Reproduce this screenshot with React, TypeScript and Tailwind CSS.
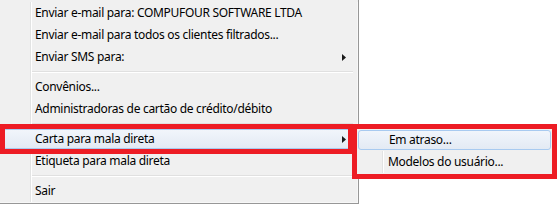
import React from "react";

type Item = { kind: "item"; label: string; arrow?: boolean; hot?: boolean } | { kind: "sep" };

const items: Item[] = [
  { kind: "item", label: "Enviar e-mail para: COMPUFOUR SOFTWARE LTDA" },
  { kind: "item", label: "Enviar e-mail para todos os clientes filtrados..." },
  { kind: "item", label: "Enviar SMS para:", arrow: true },
  { kind: "sep" },
  { kind: "item", label: "Convênios..." },
  { kind: "item", label: "Administradoras de cartão de crédito/débito" },
  { kind: "sep" },
  { kind: "item", label: "Carta para mala direta", arrow: true, hot: true },
  { kind: "item", label: "Etiqueta para mala direta" },
  { kind: "sep" },
  { kind: "item", label: "Sair" },
];

function Arrow() {
  return (
    <svg width="4" height="7" viewBox="0 0 4 7" className="block">
      <path d="M0 0 L4 3.5 L0 7 Z" fill="#1a1a1a" />
    </svg>
  );
}

function Gutter({ w }: { w: string }) {
  return (
    <div className={`${w} self-stretch flex shrink-0`}>
      <div className="flex-1" />
      <div className="w-px bg-[#e2e3e3]" />
      <div className="w-px bg-white" />
    </div>
  );
}

function MainRow({ item }: { item: Item }) {
  if (item.kind === "sep") {
    return (
      <div className="flex h-[8px]">
        <Gutter w="w-[32px]" />
        <div className="flex-1 flex flex-col justify-center pr-[3px]">
          <div className="h-px bg-[#e0e0e0]" />
          <div className="h-px bg-white" />
        </div>
      </div>
    );
  }
  if (item.hot) {
    return (
      <div className="h-[22px] py-px px-[3px]">
        <div className="h-full flex items-center rounded-[3px] border border-[#a8caf0] bg-gradient-to-b from-[#f1f5fb] to-[#e3eaf4]">
          <div className="w-[31px] shrink-0" />
          <div className="flex-1 whitespace-nowrap">{item.label}</div>
          {item.arrow && (
            <div className="w-[8px] shrink-0 mr-[2px] flex items-center">
              <Arrow />
            </div>
          )}
        </div>
      </div>
    );
  }
  return (
    <div className="flex h-[22px] items-stretch">
      <Gutter w="w-[32px]" />
      <div className="flex-1 flex items-center pl-[3px] whitespace-nowrap">{item.label}</div>
      {item.arrow && (
        <div className="w-[8px] shrink-0 mr-[6px] flex items-center">
          <Arrow />
        </div>
      )}
    </div>
  );
}

export default function App() {
  return (
    <div
      className="relative w-[557px] h-[206px] bg-white overflow-hidden text-[12px] leading-none tracking-[-0.3px] text-black"
      style={{ fontFamily: "'Noto Sans', 'Open Sans', sans-serif" }}
    >
      <div className="w-[359px] h-[204px] bg-[#f0f0f0] border-r border-b border-[#979797] pt-[2px]">
        <div className="h-full border-r border-b border-[#f7f7f7] pr-[1px]">
          {items.map((it, i) => (
            <MainRow key={i} item={it} />
          ))}
        </div>
      </div>

      {/* Submenu popup */}
      <div className="absolute left-[353px] top-[125px] w-[203px] h-[52px] bg-[#f0f0f0] border border-[#979797] pt-[3px] px-[4px]">
        <div className="h-[22px] py-px">
          <div className="h-full flex items-center rounded-[3px] border border-[#a8caf0] bg-gradient-to-b from-[#f1f5fb] to-[#e3eaf4]">
            <div className="w-[30px] shrink-0" />
            <div className="whitespace-nowrap">Em atraso...</div>
          </div>
        </div>
        <div className="flex h-[22px]">
          <Gutter w="w-[26px]" />
          <div className="flex items-center pl-[4px] whitespace-nowrap">Modelos do usuário...</div>
        </div>
      </div>

      {/* Red annotation boxes */}
      <div className="absolute left-0 top-[124px] w-[353px] h-[30px] border-[5px] border-[#ed1c24]" />
      <div className="absolute left-[352px] top-[124px] w-[205px] h-[55px] border-[5px] border-[#ed1c24]" />
    </div>
  );
}
